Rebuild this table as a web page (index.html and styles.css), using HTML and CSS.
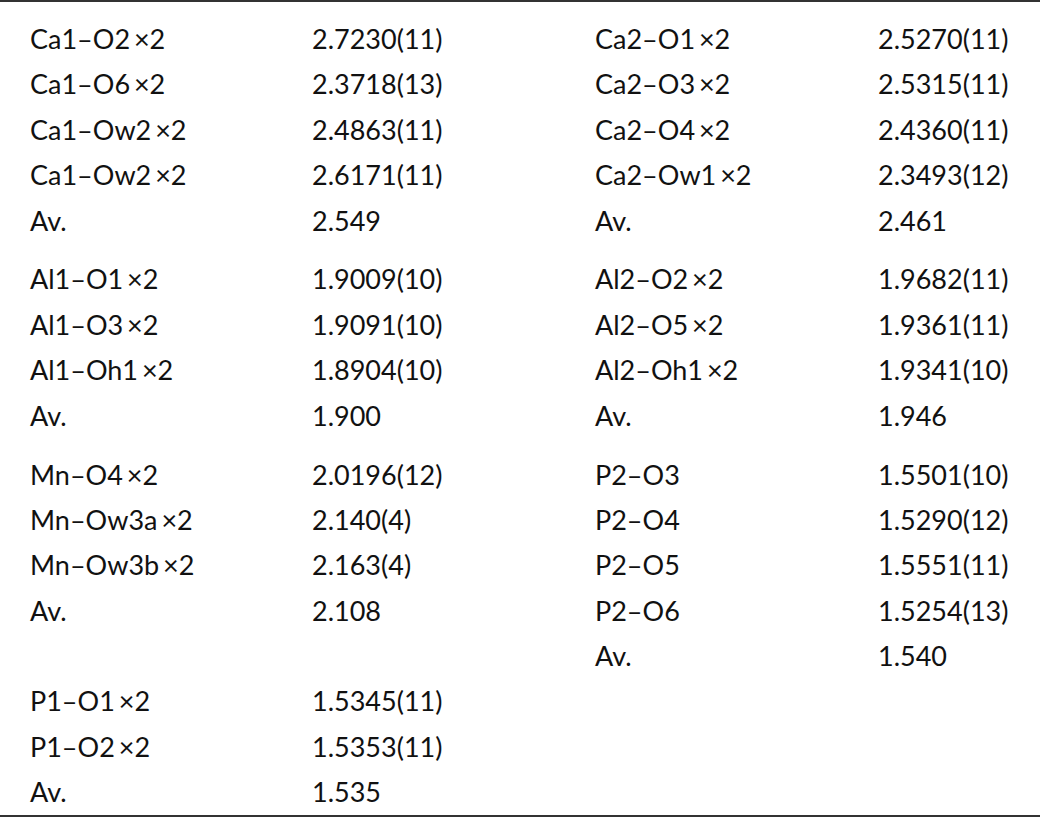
FILE: index.html
```html
<!DOCTYPE html>
<html lang="en">
<head>
<meta charset="utf-8">
<title>Bond distances</title>
<link rel="stylesheet" href="styles.css">
</head>
<body>
<div class="bond-table">
  <div class="group">
    <div class="cell">Ca1–O2 ×2</div><div class="cell">2.7230(11)</div><div class="cell">Ca2–O1 ×2</div><div class="cell">2.5270(11)</div>
    <div class="cell">Ca1–O6 ×2</div><div class="cell">2.3718(13)</div><div class="cell">Ca2–O3 ×2</div><div class="cell">2.5315(11)</div>
    <div class="cell">Ca1–Ow2 ×2</div><div class="cell">2.4863(11)</div><div class="cell">Ca2–O4 ×2</div><div class="cell">2.4360(11)</div>
    <div class="cell">Ca1–Ow2 ×2</div><div class="cell">2.6171(11)</div><div class="cell">Ca2–Ow1 ×2</div><div class="cell">2.3493(12)</div>
    <div class="cell">Av.</div><div class="cell">2.549</div><div class="cell">Av.</div><div class="cell">2.461</div>
  </div>
  <div class="group">
    <div class="cell">Al1–O1 ×2</div><div class="cell">1.9009(10)</div><div class="cell">Al2–O2 ×2</div><div class="cell">1.9682(11)</div>
    <div class="cell">Al1–O3 ×2</div><div class="cell">1.9091(10)</div><div class="cell">Al2–O5 ×2</div><div class="cell">1.9361(11)</div>
    <div class="cell">Al1–Oh1 ×2</div><div class="cell">1.8904(10)</div><div class="cell">Al2–Oh1 ×2</div><div class="cell">1.9341(10)</div>
    <div class="cell">Av.</div><div class="cell">1.900</div><div class="cell">Av.</div><div class="cell">1.946</div>
  </div>
  <div class="group">
    <div class="cell">Mn–O4 ×2</div><div class="cell">2.0196(12)</div><div class="cell">P2–O3</div><div class="cell">1.5501(10)</div>
    <div class="cell">Mn–Ow3a ×2</div><div class="cell">2.140(4)</div><div class="cell">P2–O4</div><div class="cell">1.5290(12)</div>
    <div class="cell">Mn–Ow3b ×2</div><div class="cell">2.163(4)</div><div class="cell">P2–O5</div><div class="cell">1.5551(11)</div>
    <div class="cell">Av.</div><div class="cell">2.108</div><div class="cell">P2–O6</div><div class="cell">1.5254(13)</div>
    <div class="cell"></div><div class="cell"></div><div class="cell">Av.</div><div class="cell">1.540</div>
    <div class="cell">P1–O1 ×2</div><div class="cell">1.5345(11)</div><div class="cell"></div><div class="cell"></div>
    <div class="cell">P1–O2 ×2</div><div class="cell">1.5353(11)</div><div class="cell"></div><div class="cell"></div>
    <div class="cell">Av.</div><div class="cell">1.535</div><div class="cell"></div><div class="cell"></div>
  </div>
</div>
</body>
</html>
```

FILE: styles.css
```css
html, body {
  margin: 0;
  padding: 0;
  background: #ffffff;
}

body {
  font-family: Lato, "Liberation Sans", sans-serif;
  font-size: 27px;
  color: #111111;
}

.bond-table {
  width: 1040px;
  border-top: 2px solid #333333;
  border-bottom: 2px solid #333333;
  padding-top: 14px;
  display: flex;
  flex-direction: column;
  gap: 13.5px;
}

.group {
  display: grid;
  grid-template-columns: 282px 283px 283px 1fr;
  grid-auto-rows: 45.4px;
}

.cell {
  padding-left: 30px;
  line-height: 45.4px;
  white-space: nowrap;
  word-spacing: -3px;
}
```
